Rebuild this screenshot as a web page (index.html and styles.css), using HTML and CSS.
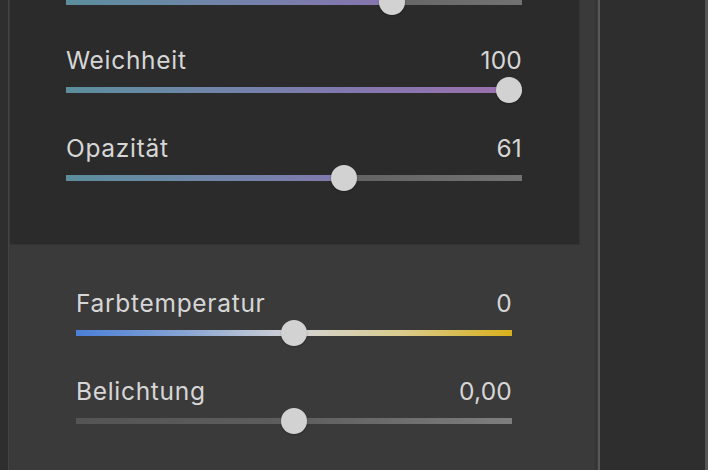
FILE: index.html
```html
<!DOCTYPE html>
<html lang="de">
<head>
<meta charset="utf-8">
<link rel="stylesheet" href="styles.css">
</head>
<body>
<div class="app">
  <div class="edge-left"></div>
  <div class="main">
    <section class="panel-top">
      <div class="row row-first">
        <div class="row-head"><span class="label">Größe</span><span class="value">71</span></div>
        <div class="slider">
          <div class="track track-grey">
            <div class="fill fill-tint" style="width:71.5%"></div>
          </div>
          <div class="thumb" style="left:71.5%"></div>
        </div>
      </div>
      <div class="row">
        <div class="row-head"><span class="label">Weichheit</span><span class="value">100</span></div>
        <div class="slider">
          <div class="track track-grey">
            <div class="fill fill-tint" style="width:100%"></div>
          </div>
          <div class="thumb" style="left:calc(100% - 13px)"></div>
        </div>
      </div>
      <div class="row">
        <div class="row-head"><span class="label">Opazität</span><span class="value">61</span></div>
        <div class="slider">
          <div class="track track-grey">
            <div class="fill fill-tint" style="width:61%"></div>
          </div>
          <div class="thumb" style="left:61%"></div>
        </div>
      </div>
    </section>
    <section class="panel-bottom">
      <div class="row">
        <div class="row-head"><span class="label">Farbtemperatur</span><span class="value">0</span></div>
        <div class="slider">
          <div class="track track-temp"></div>
          <div class="thumb" style="left:50%"></div>
        </div>
      </div>
      <div class="row">
        <div class="row-head"><span class="label">Belichtung</span><span class="value">0,00</span></div>
        <div class="slider">
          <div class="track track-neutral"></div>
          <div class="thumb" style="left:50%"></div>
        </div>
      </div>
      <div class="row">
        <div class="row-head"><span class="label">Kontrast</span><span class="value">0</span></div>
        <div class="slider">
          <div class="track track-neutral"></div>
          <div class="thumb" style="left:50%"></div>
        </div>
      </div>
    </section>
  </div>
  <div class="divider"></div>
  <div class="side"></div>
  <div class="edge-right"></div>
</div>
</body>
</html>
```

FILE: styles.css
```css
* { box-sizing: border-box; }
html, body {
  margin: 0;
  padding: 0;
  width: 708px;
  height: 470px;
  overflow: hidden;
  background: #2e2e2e;
  font-family: Inter, "Noto Sans", "Liberation Sans", sans-serif;
}
.app {
  display: flex;
  width: 708px;
  height: 470px;
}
.edge-left {
  width: 9px;
  flex: none;
  background: #2e2e2e;
  border-right: 1px solid #444;
}
.main {
  width: 587px;
  flex: none;
  background: #3a3a3a;
  display: flex;
  flex-direction: column;
  overflow: hidden;
  border-right: 1px solid #363636;
}
.divider {
  width: 4px;
  flex: none;
  background: #3c3c3c;
  border-left: 1px solid #333;
  border-right: 2px solid #575757;
}
.side {
  flex: 1;
  background: #2e2e2e;
}
.edge-right {
  width: 3px;
  flex: none;
  background: #555;
}
.panel-top {
  margin-left: 1px;
  width: 570px;
  height: 245px;
  flex: none;
  background: #2b2b2b;
  border-right: 1px solid #343434;
  border-bottom: 1px solid #333;
  padding: 0 57px 0 56px;
  display: flex;
  flex-direction: column;
  gap: 30px;
  overflow: hidden;
}
.panel-bottom {
  padding: 45px 83px 0 67px;
  display: flex;
  flex-direction: column;
  gap: 30px;
}
.row-first {
  margin-top: -41px;
}
.row {
  display: flex;
  flex-direction: column;
  flex: none;
}
.row-head {
  display: flex;
  justify-content: space-between;
  align-items: flex-start;
  height: 28px;
  line-height: 26px;
  font-size: 24.5px;
  color: #d6d6d6;
  letter-spacing: 0.7px;
}
.value { letter-spacing: 0.2px; }
.slider {
  position: relative;
  height: 30px;
  display: flex;
  align-items: center;
}
.track {
  width: 100%;
  height: 6px;
  position: relative;
  overflow: hidden;
}
.track-grey {
  background: linear-gradient(90deg, #5a5a5a 0%, #5a5a5a 40%, #727272 100%);
}
.fill {
  position: absolute;
  left: 0;
  top: 0;
  bottom: 0;
}
.fill-tint {
  background-image: linear-gradient(90deg, #5b8e9d 0%, #6f86a8 30%, #8079ae 60%, #9d6fae 100%);
  background-size: 456px 100%;
  background-repeat: no-repeat;
}
.track-temp {
  background: linear-gradient(90deg, #4a7fd8 0%, #88a4d2 25%, #d4d4d6 50%, #dacb8c 75%, #d8b01a 100%);
}
.track-neutral {
  background: linear-gradient(90deg, #545454 0%, #5e5e5e 50%, #7e7e7e 100%);
}
.thumb {
  position: absolute;
  top: 50%;
  width: 26px;
  height: 26px;
  margin: -13px 0 0 -13px;
  border-radius: 50%;
  background: #d2d2d2;
  box-shadow: 0 1px 2px rgba(0,0,0,0.25);
}
```
